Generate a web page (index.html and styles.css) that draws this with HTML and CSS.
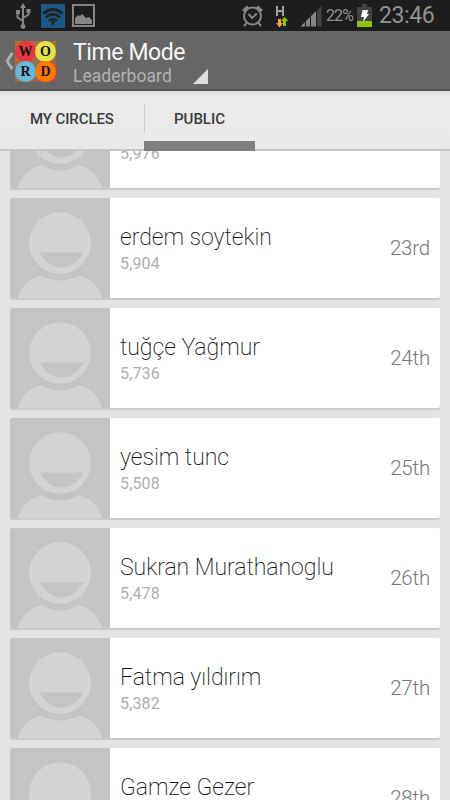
FILE: index.html
```html
<!DOCTYPE html>
<html lang="en">
<head>
<meta charset="utf-8">
<title>Time Mode</title>
<link rel="stylesheet" href="styles.css">
</head>
<body>
<svg class="defs" aria-hidden="true">
  <symbol id="person" viewBox="0 0 100 100">
    <path fill="#d4d4d4" d="M7.500 100C12 87 21 79 32 77.500Q50 87.500 68 77.500C79 79 88 87 92.500 100Z"/>
    <circle cx="50" cy="45" r="32" fill="#c4c4c4"/>
    <circle cx="50" cy="45" r="30.800" fill="#d4d4d4"/>
    <path fill="#c4c4c4" d="M29.500 54.500H73.500C68 64 60.500 69.500 51.500 69.500S35 64 29.500 54.500Z"/>
  </symbol>
</svg>
<div class="screen">
  <header class="status">
    <div class="status-left">
      <svg class="usb" width="16" height="26" viewBox="0 0 16 26" fill="none" stroke="#858585" stroke-width="2"><path d="M8 4v19M8 18L2.500 14.500V9M8 15l5.500-3.500V7"/><path fill="#858585" stroke="none" d="M8 0l3 5H5zM1 7h4v4H1zM11.500 6h4v4h-4z"/><circle cx="8" cy="23.500" r="2.400" fill="#858585" stroke="none"/></svg>
      <svg width="24" height="24" viewBox="0 0 24 24"><path fill="#1c5785" d="M0 0h24v24H0z"/><g fill="none" stroke="#202528" stroke-width="2.800"><path d="M2.500 9.500Q12 1.500 21.500 9.500M5 13.500Q12 7 19 13.500M8 17Q12 13.500 16 17"/></g><circle cx="12" cy="19" r="2" fill="#202528"/></svg>
      <svg class="picture" width="23" height="23" viewBox="0 0 23 23"><path fill="none" stroke="#858585" stroke-width="2" d="M1 1h21v21H1z"/><path fill="#858585" d="M3 20v-6l3-3 2 1 2-2 4 4 3-1 3 3v4z"/></svg>
    </div>
    <div class="status-right">
      <svg class="alarm" width="21" height="22" viewBox="0 0 21 22" fill="none" stroke="#858585" stroke-width="2"><circle cx="10.500" cy="11" r="8.500"/><path d="M6.500 9l3.700 4 4.500-4.500M4.500 18L2 21M16.500 18l2.500 3"/><path stroke-width="3" d="M1 6l5-4.500M20 6l-5-4.500"/></svg>
      <svg class="data" width="14" height="22" viewBox="0 0 14 22"><path fill="none" stroke="#a0a0a0" stroke-width="2" d="M2 0v10M8 0v10M2 5h6"/><path fill="#ffa02c" d="M3 13h3v4h2l-3.500 4.500L1 17h2z"/><path fill="#8bc900" d="M8 20h3v-5h2.500L9.500 11 6 15h2z"/></svg>
      <svg class="signal" width="21" height="21" viewBox="0 0 21 21"><path fill="#858585" d="M0 20.500V20l4-4v4.500zM5 15l4-4v9.500H5zM10 10l5-5v15.500h-5z"/><path fill="#434343" d="M16 4.500L20.500 0v20.500H16z"/></svg>
      <span class="percent">22%</span>
      <svg class="battery" width="15" height="23" viewBox="0 0 15 23"><path fill="#434343" d="M5 0h5v3h5v20H0V3h5z"/><path fill="#8bc900" d="M0 17h15v6H0z"/><path fill="#fff" d="M5.500 6H11l-1 4h2L6 18l1-5H4z"/></svg>
      <time class="clock">23:46</time>
    </div>
  </header>
  <div class="bar">
    <svg class="back" width="9" height="18" viewBox="0 0 9 18"><path fill="none" stroke="#acacac" stroke-width="3" d="M7.500 1Q4 5.500 2.200 9Q4 12.500 7.500 17"/></svg>
    <div class="logo"><i class="red">W</i><i class="yellow">O</i><i class="blue">R</i><i class="orange">D</i></div>
    <div class="titles"><h1>Time Mode</h1><p>Leaderboard</p></div>
    <svg class="caret" width="15" height="15" viewBox="0 0 15 15"><path fill="#ddd" d="M15 0v15H0z"/></svg>
  </div>
  <nav class="tabs">
    <a class="tab circles">MY CIRCLES</a>
    <a class="tab public">PUBLIC</a>
  </nav>
  <main class="list">
    <article class="card"><div class="avatar"><svg><use href="#person"/></svg></div><div class="info"><h2></h2><p>5,976</p></div></article>
    <article class="card"><div class="avatar"><svg><use href="#person"/></svg></div><div class="info"><h2>erdem soytekin</h2><p>5,904</p></div><b>23rd</b></article>
    <article class="card"><div class="avatar"><svg><use href="#person"/></svg></div><div class="info"><h2>tuğçe Yağmur</h2><p>5,736</p></div><b>24th</b></article>
    <article class="card"><div class="avatar"><svg><use href="#person"/></svg></div><div class="info"><h2>yesim tunc</h2><p>5,508</p></div><b>25th</b></article>
    <article class="card"><div class="avatar"><svg><use href="#person"/></svg></div><div class="info"><h2>Sukran Murathanoglu</h2><p>5,478</p></div><b>26th</b></article>
    <article class="card"><div class="avatar"><svg><use href="#person"/></svg></div><div class="info"><h2>Fatma yıldırım</h2><p>5,382</p></div><b>27th</b></article>
    <article class="card"><div class="avatar"><svg><use href="#person"/></svg></div><div class="info"><h2>Gamze Gezer</h2></div><b>28th</b></article>
  </main>
</div>
</body>
</html>
```
FILE: styles.css
```css
* { box-sizing: border-box; margin: 0; padding: 0; }
body { font-family: Roboto, "Noto Sans", sans-serif; background: #e4e4e4; }
svg { display: block; flex: none; }
.defs { display: none; }
.screen { width: 450px; height: 800px; overflow: hidden; display: flex; flex-direction: column; background: #e4e4e4; }

.status { height: 31px; flex: none; background: #1d1d1d; display: flex; justify-content: space-between; padding: 0 15px; color: #929292; }
.status-left { display: flex; align-items: flex-start; padding-top: 4px; gap: 7px; }
.status-left .usb { margin: -1px 3px 0 0; }
.status-right { display: flex; align-items: flex-start; }
.alarm { margin: 5px 12px 0 0; }
.data { margin: 6px 12px 0 0; }
.signal { margin: 6px 4px 0 0; }
.percent { font-size: 16px; line-height: 32px; width: 31px; letter-spacing: -0.9px; }
.battery { margin: 4px 7px 0 0; }
.clock { font-size: 23px; line-height: 31px; width: 56px; letter-spacing: -0.4px; white-space: nowrap; }

.bar { height: 60px; flex: none; background: #666; border-bottom: 2px solid #515151; display: flex; align-items: flex-start; padding-left: 5px; }
.back { margin-top: 21px; }
.logo { display: grid; grid-template-columns: 20px 20px; grid-auto-rows: 20px; width: 41px; height: 41px; margin: 10px 0 0 1px; background: linear-gradient(135deg, #c46a20, #99704f 55%, #a84d55); }
.logo i { width: 21px; height: 21px; border-radius: 50%; font: bold 14px/21px "Liberation Serif", serif; text-align: center; color: #171717; }
.logo .red { background: #e9353f; }
.logo .yellow { background: #e4e449; }
.logo .blue { background: #65b9d9; }
.logo .orange { background: #ff7900; }
.titles { width: 120px; margin-left: 17px; white-space: nowrap; }
.titles h1 { font-weight: 400; font-size: 23px; letter-spacing: -0.4px; line-height: 28px; margin-top: 8px; color: #f5f5f5; }
.titles p { font-size: 17.500px; letter-spacing: 0.05px; line-height: 19px; color: #b2b2b2; }
.caret { margin-top: 38px; }

.tabs { height: 60px; flex: none; display: flex; background: linear-gradient(#dadada, #eaeaea 5px, #e9e9e9); border-bottom: 2px solid #c5c5c5; font-size: 15px; letter-spacing: -0.1px; font-weight: 500; color: #3c3c3c; line-height: 56px; }
.tab { white-space: nowrap; }
.circles { width: 144px; padding-left: 30px; }
.public { width: 111px; height: 60px; padding-left: 30px; letter-spacing: 0; background: linear-gradient(#cfcfcf, #cfcfcf) 0 12px / 1px 30px no-repeat; border-bottom: 10px solid #7f7f7f; }

.list { flex: 1; min-height: 0; overflow: hidden; padding: 0 10px; }
.card { height: 100px; margin-bottom: 10px; display: flex; background: #fff; border-radius: 2px; box-shadow: 0 2px 1px #cacaca; }
.card:first-child { margin-top: -63.500px; }
.avatar { width: 100px; height: 100px; background: #c4c4c4; border-radius: 2px 0 0 2px; }
.avatar svg { width: 100px; height: 100px; }
.info { flex: 1; padding: 26px 0 0 10px; }
.info h2 { height: 28px; font-weight: 200; font-size: 23px; line-height: 28px; letter-spacing: -0.03px; color: #111; white-space: nowrap; }
.info p { font-size: 16px; letter-spacing: 0.15px; line-height: 24px; color: #b0b0b0; }
.card b { font-weight: 300; font-size: 20.500px; letter-spacing: -0.2px; line-height: 100px; color: #777; padding-right: 10px; }
```
